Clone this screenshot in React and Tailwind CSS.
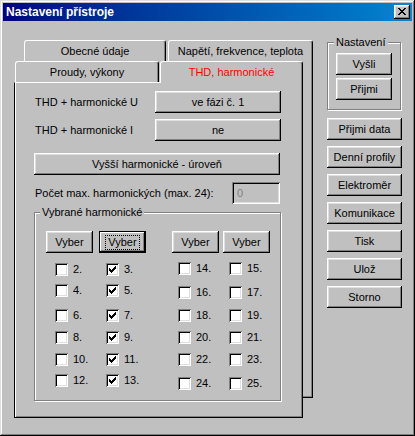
import clsx from "clsx";

const raised =
  "shadow-[inset_-1px_-1px_0_#000,inset_1px_1px_0_#fff,inset_-2px_-2px_0_#808080,inset_2px_2px_0_#dfdfdf]";
const focusedRing =
  "shadow-[inset_0_0_0_1px_#000,inset_-2px_-2px_0_#000,inset_2px_2px_0_#fff,inset_-3px_-3px_0_#808080]";
const sunken =
  "shadow-[inset_1px_1px_0_#808080,inset_-1px_-1px_0_#fff,inset_2px_2px_0_#000,inset_-2px_-2px_0_#dfdfdf]";
const etched = "border border-[#808080] shadow-[inset_1px_1px_0_#fff,1px_1px_0_#fff]";

function Btn({ children, className, focus }) {
  return (
    <div
      className={clsx(
        "flex items-center justify-center bg-[#c0c0c0] text-black whitespace-nowrap",
        focus ? focusedRing : raised,
        className
      )}
    >
      {focus ? (
        <span className="outline-1 outline-dotted outline-black px-[2px] leading-[13px]">{children}</span>
      ) : (
        children
      )}
    </div>
  );
}

function Check({ label, checked, className }) {
  return (
    <div className={clsx("flex items-center h-[13px]", className)}>
      <div className={clsx("w-[13px] h-[13px] bg-white shrink-0", sunken)}>
        {checked && (
          <svg width="13" height="13" viewBox="0 0 13 13" shapeRendering="crispEdges">
            <path d="M3 5 L5 7 L10 2 L10 5 L5 10 L3 8 Z" fill="#000" />
          </svg>
        )}
      </div>
      <span className="ml-[5px] leading-none">{label}</span>
    </div>
  );
}

function Tab({ children, className, active }) {
  return (
    <div
      className={clsx(
        "flex items-center justify-center bg-[#c0c0c0] border-l border-t border-white border-r border-r-black rounded-t-[3px] shadow-[inset_-1px_0_0_#808080] whitespace-nowrap",
        active ? "text-[#ff0000] relative z-10 h-[22px] -mb-[1px]" : "h-[21px]",
        className
      )}
    >
      {children}
    </div>
  );
}

// checkbox columns: [label, checked, gap above]
const cols = [
  { w: "w-[51px]", items: [["2.", false, 1], ["4.", false, 8], ["6.", false, 12], ["8.", false, 9], ["10.", false, 9], ["12.", false, 8]] },
  { w: "w-[72px]", items: [["3.", true, 1], ["5.", true, 8], ["7.", true, 12], ["9.", true, 9], ["11.", true, 9], ["13.", true, 8]] },
  { w: "w-[51px]", items: [["14.", false, 0], ["16.", false, 11], ["18.", false, 10], ["20.", false, 9], ["22.", false, 9], ["24.", false, 11]] },
  { w: "w-[51px]", items: [["15.", false, 0], ["17.", false, 11], ["19.", false, 10], ["21.", false, 9], ["23.", false, 9], ["25.", false, 11]] },
];

const gapClass = {
  0: "mt-0",
  1: "mt-[1px]",
  8: "mt-[8px]",
  9: "mt-[9px]",
  10: "mt-[10px]",
  11: "mt-[11px]",
  12: "mt-[12px]",
};

const sideButtons = ["Přijmi data", "Denní profily", "Elektroměr", "Komunikace", "Tisk", "Ulož", "Storno"];

export default function App() {
  return (
    <div
      className={clsx(
        "w-[415px] h-[436px] bg-[#c0c0c0] p-[3px] text-[11px] text-black font-['Liberation_Sans',Arial,sans-serif]",
        "shadow-[inset_-1px_-1px_0_#000,inset_1px_1px_0_#dfdfdf,inset_-2px_-2px_0_#808080,inset_2px_2px_0_#fff]"
      )}
    >
      {/* title bar */}
      <div className="h-[18px] flex items-center justify-between bg-linear-to-r from-[#000080] to-[#1084d0] pl-[3px] pr-[2px]">
        <span className="text-white font-bold text-[12px]">Nastavení přístroje</span>
        <div className={clsx("w-[16px] h-[14px] bg-[#c0c0c0] flex items-center justify-center", raised)}>
          <svg width="8" height="7" viewBox="0 0 8 7" shapeRendering="crispEdges" className="-mt-[1px] -ml-[1px]">
            <rect x="0" y="0" width="2" height="1" />
            <rect x="6" y="0" width="2" height="1" />
            <rect x="1" y="1" width="2" height="1" />
            <rect x="5" y="1" width="2" height="1" />
            <rect x="2" y="2" width="4" height="1" />
            <rect x="3" y="3" width="2" height="1" />
            <rect x="2" y="4" width="4" height="1" />
            <rect x="1" y="5" width="2" height="1" />
            <rect x="5" y="5" width="2" height="1" />
            <rect x="0" y="6" width="2" height="1" />
            <rect x="6" y="6" width="2" height="1" />
          </svg>
        </div>
      </div>

      <div className="flex items-start">
        {/* tab control */}
        <div className="ml-[11px] mt-[19px] w-[299px]">
          <div className="flex pl-[10px] gap-[2px]">
            <Tab className="w-[142px]">Obecné údaje</Tab>
            <Tab className="w-[145px]">Napětí, frekvence, teplota</Tab>
          </div>
          <div className="h-[337px] border-r border-b border-black shadow-[inset_-1px_-1px_0_#808080]">
            <div className="flex items-start pl-[1px] gap-[1px] h-[21px]">
              <Tab className="w-[144px]">Proudy, výkony</Tab>
              <Tab className="w-[143px]" active>
                THD, harmonické
              </Tab>
            </div>
            <div className="relative w-[289px] h-[336px] bg-[#c0c0c0] border-t border-t-white border-l border-l-black border-r border-r-black border-b border-b-black shadow-[inset_1px_0_0_#fff,inset_-1px_-1px_0_#808080] pl-[19px] flex flex-col">
              <div className="flex items-center mt-[8px]">
                <span className="w-[121px] pl-[1px]">THD + harmonické U</span>
                <Btn className="w-[126px] h-[22px]">ve fázi č. 1</Btn>
              </div>
              <div className="flex items-center mt-[6px]">
                <span className="w-[121px] pl-[1px]">THD + harmonické I</span>
                <Btn className="w-[126px] h-[22px]">ne</Btn>
              </div>
              <Btn className="w-[246px] h-[22px] mt-[12px]">Vyšší harmonické - úroveň</Btn>
              <div className="flex items-center mt-[7px]">
                <span className="w-[198px] pl-[1px]">Počet max. harmonických (max. 24):</span>
                <div className={clsx("w-[48px] h-[22px] bg-[#c0c0c0] flex items-center pl-[5px] text-[#808080]", sunken)}>
                  0
                </div>
              </div>

              <fieldset className={clsx("w-[246px] h-[195px] mt-[2px]", etched)}>
                <legend className="ml-[5px] px-[2px] leading-[13px] bg-[#c0c0c0]">Vybrané harmonické</legend>
                <div className="flex mt-[12px] pl-[11px]">
                  <Btn className="w-[47px] h-[22px]">Vyber</Btn>
                  <Btn className="w-[47px] h-[22px] ml-[6px]" focus>
                    Vyber
                  </Btn>
                  <Btn className="w-[47px] h-[22px] ml-[26px]">Vyber</Btn>
                  <Btn className="w-[47px] h-[22px] ml-[4px]">Vyber</Btn>
                </div>
                <div className="flex mt-[9px] pl-[20px]">
                  {cols.map((col, i) => (
                    <div key={i} className={clsx("flex flex-col", col.w)}>
                      {col.items.map(([label, checked, gap]) => (
                        <Check key={label} label={label} checked={checked} className={gapClass[gap]} />
                      ))}
                    </div>
                  ))}
                </div>
              </fieldset>
            </div>
          </div>
        </div>

        {/* right column */}
        <div className="ml-[14px] mt-[15px] w-[75px] flex flex-col">
          <fieldset className={clsx("w-[74px] h-[74px]", etched)}>
            <legend className="ml-[6px] px-[2px] leading-[13px] bg-[#c0c0c0]">Nastavení</legend>
            <div className="pl-[8px] flex flex-col">
              <Btn className="w-[56px] h-[22px] mt-[4px]">Vyšli</Btn>
              <Btn className="w-[56px] h-[22px] mt-[3px]">Přijmi</Btn>
            </div>
          </fieldset>
          <div className="flex flex-col gap-[6px] mt-[8px]">
            {sideButtons.map((b) => (
              <Btn key={b} className="w-[75px] h-[22px]">
                {b}
              </Btn>
            ))}
          </div>
        </div>
      </div>
    </div>
  );
}
